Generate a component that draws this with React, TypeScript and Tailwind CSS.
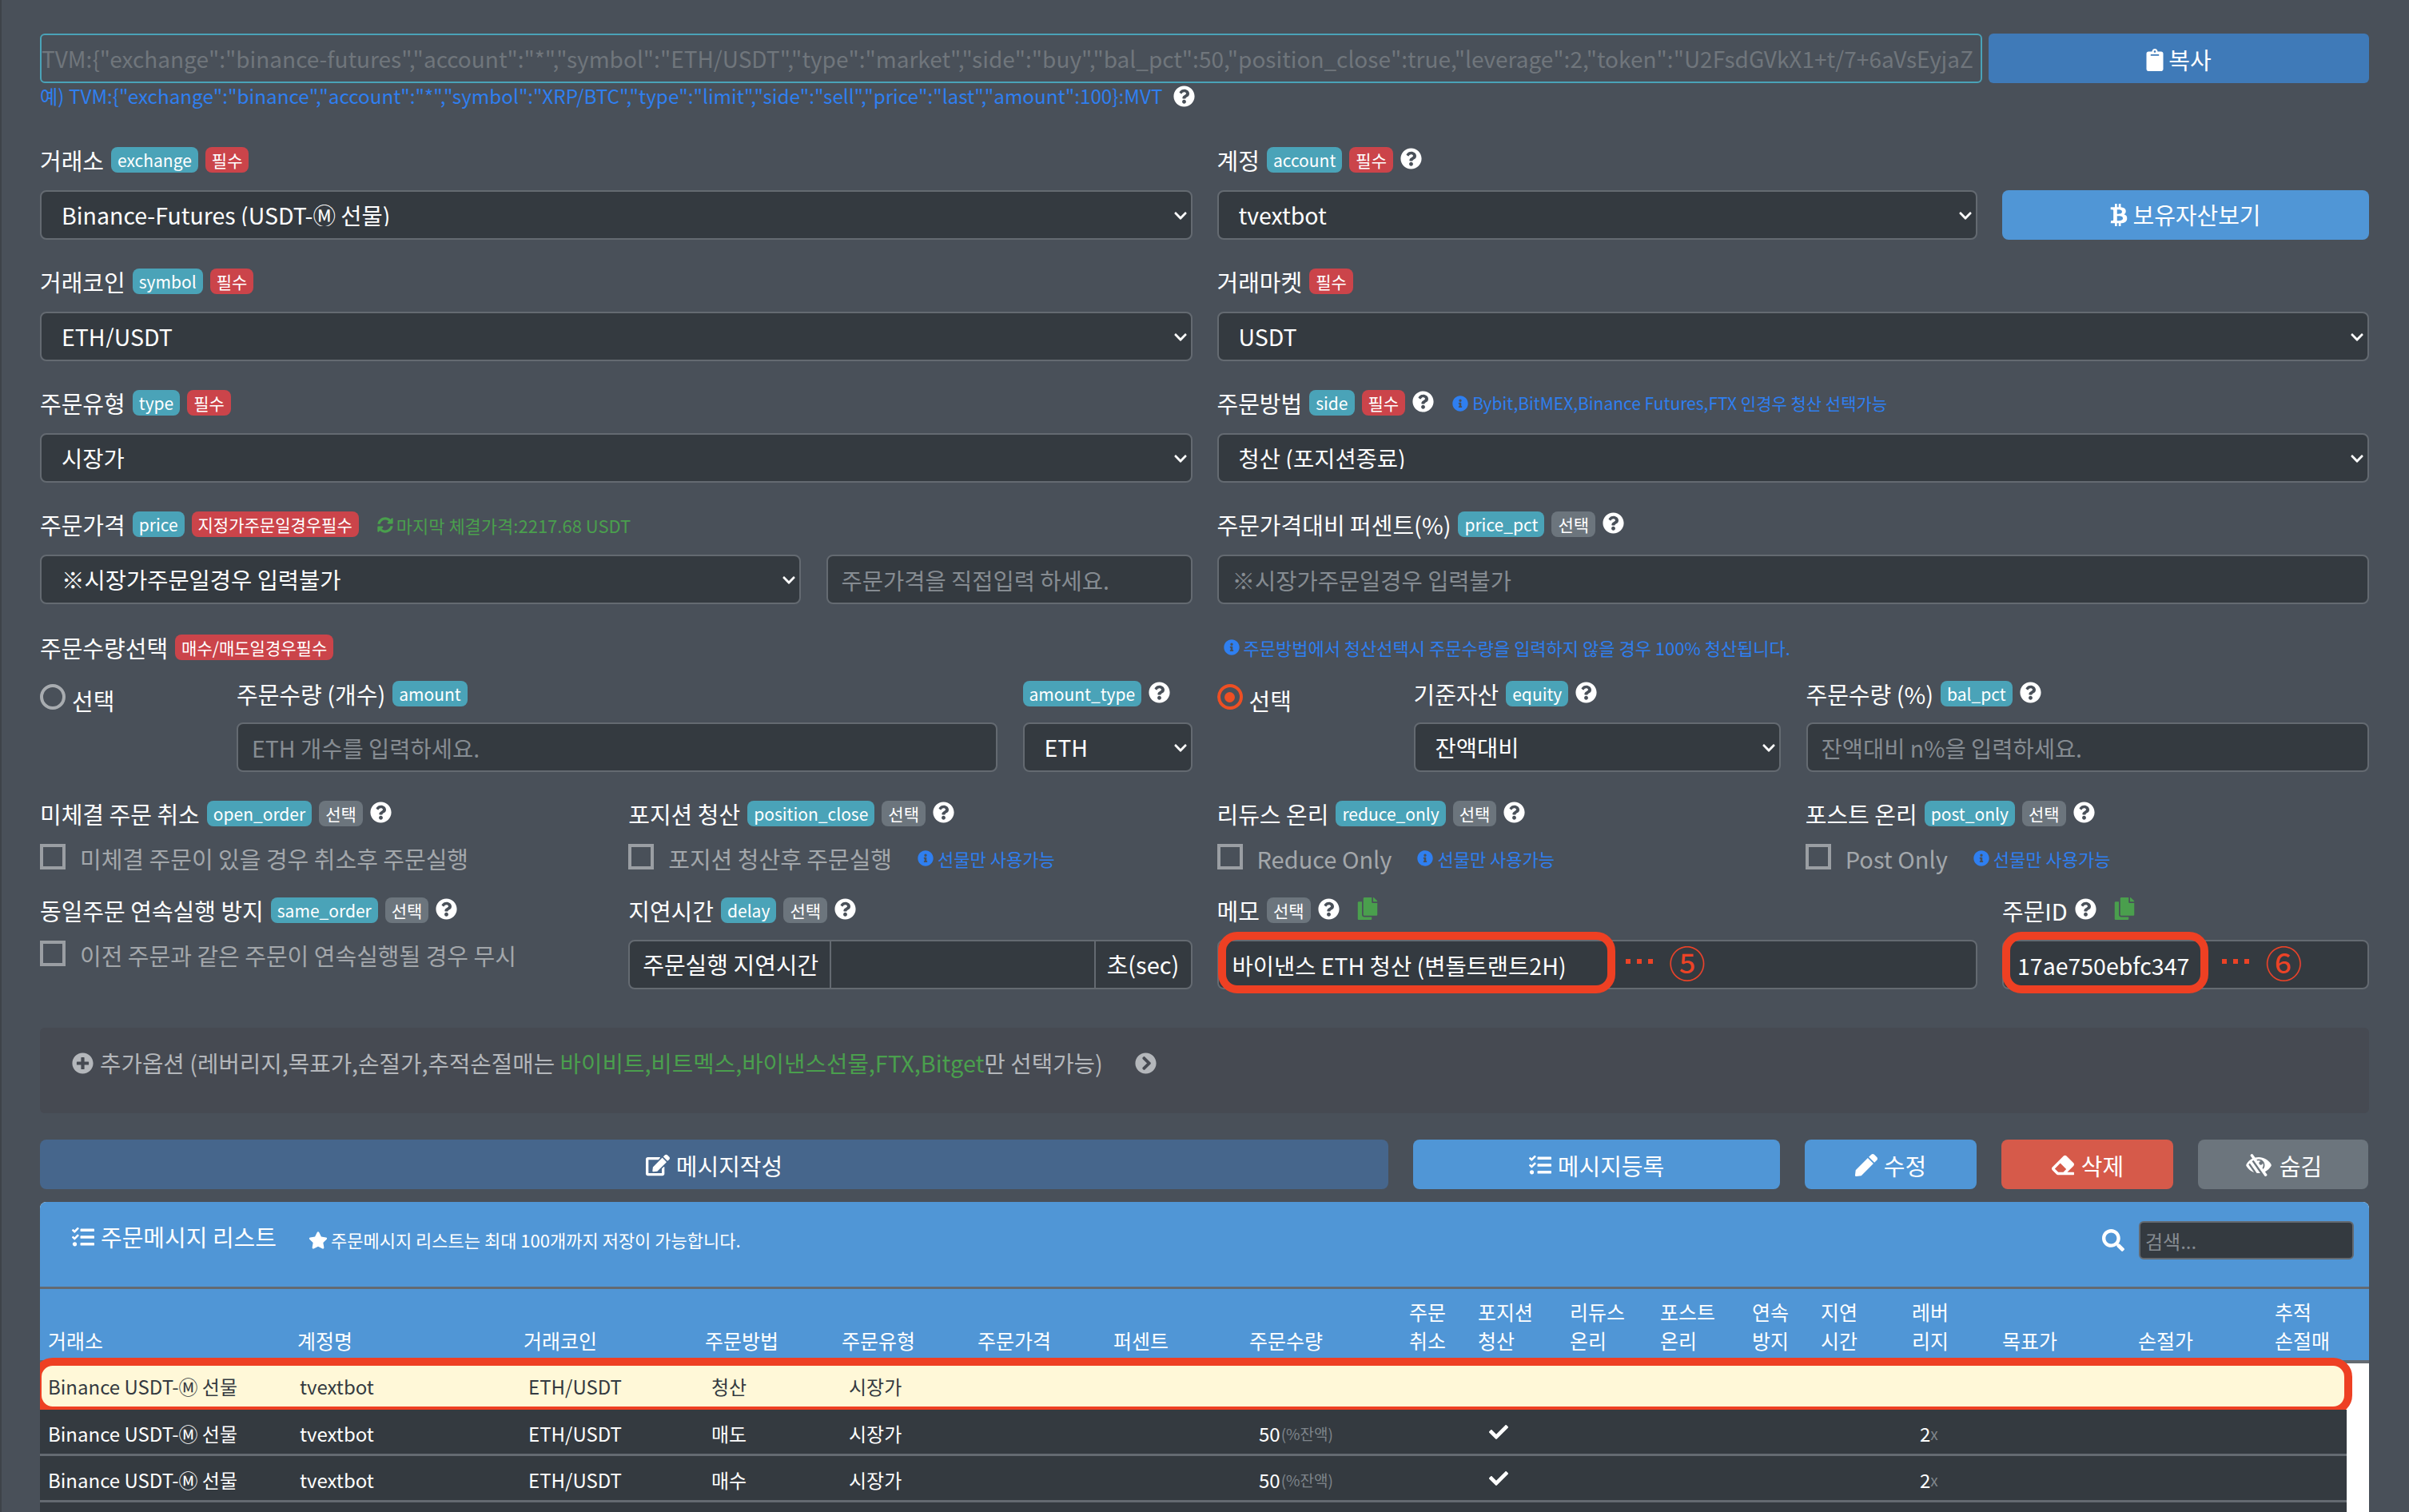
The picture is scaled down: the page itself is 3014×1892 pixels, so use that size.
import React from "react";
import {
  FaQuestionCircle, FaClipboard, FaBtc, FaInfoCircle, FaSyncAlt, FaCopy, FaPlusCircle,
  FaChevronCircleRight, FaEdit, FaTasks, FaPen, FaEraser, FaLowVision, FaStar, FaSearch, FaCheck, FaChevronDown,
} from "react-icons/fa";

function Badge({ c, children }: { c: "i" | "r" | "g"; children: React.ReactNode }) {
  const bg = c === "i" ? "bg-[#4aa3b8]" : c === "r" ? "bg-[#cb444a]" : "bg-[#6c757d]";
  return <span className={`${bg} inline-flex items-center h-[32px] px-[8px] rounded-[8px] text-white text-[21px] leading-none whitespace-nowrap`}>{children}</span>;
}

function Q() {
  return <FaQuestionCircle className="text-white w-[27px] h-[27px] -mt-[4px] shrink-0" />;
}

function Label({ text, children, cls = "" }: { text: string; children?: React.ReactNode; cls?: string }) {
  return (
    <div className={`flex items-center gap-[9px] h-[36px] whitespace-nowrap ${cls}`}>
      {text && <span className="text-white text-[29px] leading-none">{text}</span>}
      {children}
    </div>
  );
}

function Sel({ value, cls = "" }: { value: string; cls?: string }) {
  return (
    <div className={`relative h-[62px] ${cls}`}>
      <select defaultValue={value} className="appearance-none w-full h-full bg-[#343a40] border-2 border-[#646a71] rounded-[8px] pl-[25px] pr-[40px] text-white text-[28.5px] leading-none outline-none">
        <option>{value}</option>
      </select>
      <FaChevronDown className="absolute right-[6px] top-[23px] w-[18px] h-[18px] text-white pointer-events-none" />
    </div>
  );
}

function Inp({ ph, value, cls = "" }: { ph?: string; value?: string; cls?: string }) {
  return (
    <input readOnly placeholder={ph} defaultValue={value} className={`h-[62px] bg-[#343a40] border-2 border-[#646a71] rounded-[8px] px-[17px] text-white text-[28.5px] outline-none placeholder:text-[#868c92] ${cls}`} />
  );
}

function Info({ text, size = "text-[22px]" }: { text: string; size?: string }) {
  return (
    <span className={`inline-flex items-center gap-[5px] text-[#2f7ff0] ${size} leading-none whitespace-nowrap`}>
      <FaInfoCircle className="w-[20px] h-[20px] shrink-0" />
      {text}
    </span>
  );
}

function Check({ text, children }: { text: string; children?: React.ReactNode }) {
  return (
    <div className="flex items-center h-[42px] whitespace-nowrap">
      <span className="w-[32px] h-[32px] border-[4px] border-[#9a9ea3] shrink-0 -mt-[8px]" />
      <span className="ml-[18px] text-[#a3a7ab] text-[29px] leading-none -mt-[4px]">{text}</span>
      {children}
    </div>
  );
}

function Radio({ on }: { on?: boolean }) {
  return (
    <div className="flex items-start h-[42px] pt-[6px]">
      <span className={`w-[32px] h-[32px] rounded-full border-[4px] flex items-center justify-center shrink-0 ${on ? "border-[#ee4f23]" : "border-[#a8acb0]"}`}>
        {on && <span className="w-[13px] h-[13px] rounded-full bg-[#ee4f23]" />}
      </span>
      <span className="ml-[8px] text-white text-[29px] leading-none mt-[6px]">선택</span>
    </div>
  );
}

function ActionBtn({ bg, w, icon, text }: { bg: string; w: string; icon: React.ReactNode; text: string }) {
  return (
    <div className={`${bg} ${w} h-[62px] rounded-[8px] pt-[2px] flex items-center justify-center gap-[8px] text-white text-[29px] leading-none`}>
      {icon}{text}
    </div>
  );
}

function Mark({ n, left }: { n: string; left: string }) {
  return (
    <span className={`absolute top-[4px] ${left} flex items-center gap-[20px] text-[#ec4326] leading-none pointer-events-none`}>
      <span className="flex gap-[8px]">
        <span className="w-[6px] h-[6px] bg-[#ec4326]" />
        <span className="w-[6px] h-[6px] bg-[#ec4326]" />
        <span className="w-[6px] h-[6px] bg-[#ec4326]" />
      </span>
      <span className="text-[46px]">{n}</span>
    </span>
  );
}

const headCols = "grid grid-cols-[312px_283px_227px_171px_170px_170px_170px_200px_86px_115px_113px_115px_86px_114px_113px_170px_171px_128px]";
const bodyCols = "grid grid-cols-[315px_286px_229px_172px_172px_172px_169px_200px_84px_116px_115px_115px_85px_112px_115px_173px_170px_86px]";

const heads: [string, string][] = [
  ["", "거래소"], ["", "계정명"], ["", "거래코인"], ["", "주문방법"], ["", "주문유형"], ["", "주문가격"], ["", "퍼센트"], ["", "주문수량"],
  ["주문", "취소"], ["포지션", "청산"], ["리듀스", "온리"], ["포스트", "온리"], ["연속", "방지"], ["지연", "시간"], ["레버", "리지"], ["", "목표가"], ["", "손절가"], ["추적", "손절매"],
];

function Row({ side, full, light }: { side: string; full?: boolean; light?: boolean }) {
  const cell = "pl-[10px] flex items-center whitespace-nowrap";
  return (
    <div className={`relative ${bodyCols} h-[58px] text-[24px] leading-none ${light ? "bg-[#fff8d8] text-[#343a40]" : "bg-[#343a40] text-white pt-[4px] border-b-[3px] border-[#646a71]"}`}>
      <div className={cell}>Binance USDT-Ⓜ 선물</div>
      <div className={cell}>tvextbot</div>
      <div className={cell}>ETH/USDT</div>
      <div className={cell}>{side}</div>
      <div className={cell}>시장가</div>
      <div /><div />
      <div className={cell}>{full && <>50<span className="text-[#7f858b] text-[19px] ml-[1px]">(%잔액)</span></>}</div>
      <div />
      <div className={cell}>{full && <FaCheck className="w-[24px] h-[24px] ml-[4px] -mt-[3px]" />}</div>
      <div /><div /><div /><div />
      <div className={cell}>{full && <>2<span className="text-[#7f858b] text-[19px]">x</span></>}</div>
      <div /><div /><div />
      {light && <div className="absolute -left-[8px] right-[-7px] -top-[7px] -bottom-[6px] border-[10px] border-[#ee4023] rounded-[24px] pointer-events-none" />}
    </div>
  );
}

export default function App() {
  return (
    <div className="w-full h-[1892px] overflow-hidden bg-[#495059] border-l-2 border-[#3e4349] pl-[48px] pr-[50px] pt-[42px]" style={{ fontFamily: '"Noto Sans CJK KR", "Noto Sans", sans-serif' }}>
      <div className="flex gap-[8px]">
        <input readOnly defaultValue={'TVM:{"exchange":"binance-futures","account":"*","symbol":"ETH/USDT","type":"market","side":"buy","bal_pct":50,"position_close":true,"leverage":2,"token":"U2FsdGVkX1+t/7+6aVsEyjaZ'}
          className="w-[2430px] h-[62px] bg-transparent border-2 border-[#4aa3b8] rounded-[6px] text-[#70767c] text-[28px] outline-none" />
        <div className="flex-1 h-[62px] bg-[#3f7ab8] rounded-[6px] pt-[3px] flex items-center justify-center gap-[6px] text-white text-[29px]">
          <FaClipboard className="w-[22px] h-[28px]" />복사
        </div>
      </div>
      <div className="flex items-center gap-[14px] h-[32px] text-[#2f7ff0] text-[24.25px] whitespace-nowrap">
        <span>{'예) TVM:{"exchange":"binance","account":"*","symbol":"XRP/BTC","type":"limit","side":"sell","price":"last","amount":100}:MVT'}</span>
        <FaQuestionCircle className="text-white w-[27px] h-[27px]" />
      </div>

      <div className="grid grid-cols-2 gap-x-[31px] mt-[46px]">
        <div>
          <Label text="거래소"><Badge c="i">exchange</Badge><Badge c="r">필수</Badge></Label>
          <Sel value="Binance-Futures (USDT-Ⓜ 선물)" cls="mt-[20px]" />
        </div>
        <div>
          <Label text="계정"><Badge c="i">account</Badge><Badge c="r">필수</Badge><Q /></Label>
          <div className="flex gap-[31px] mt-[20px]">
            <Sel value="tvextbot" cls="flex-1" />
            <div className="w-[459px] h-[62px] bg-[#5096d6] rounded-[8px] flex items-center justify-center gap-[6px] text-white text-[29px]">
              <FaBtc className="w-[22px] h-[28px]" />보유자산보기
            </div>
          </div>
        </div>

        <div className="mt-[34px]">
          <Label text="거래코인"><Badge c="i">symbol</Badge><Badge c="r">필수</Badge></Label>
          <Sel value="ETH/USDT" cls="mt-[20px]" />
        </div>
        <div className="mt-[34px]">
          <Label text="거래마켓"><Badge c="r">필수</Badge></Label>
          <Sel value="USDT" cls="mt-[20px]" />
        </div>

        <div className="mt-[34px]">
          <Label text="주문유형"><Badge c="i">type</Badge><Badge c="r">필수</Badge></Label>
          <Sel value="시장가" cls="mt-[20px]" />
        </div>
        <div className="mt-[34px]">
          <Label text="주문방법">
            <Badge c="i">side</Badge><Badge c="r">필수</Badge><Q />
            <span className="ml-[14px] mt-[6px]"><Info text="Bybit,BitMEX,Binance Futures,FTX 인경우 청산 선택가능" size="text-[21px]" /></span>
          </Label>
          <Sel value="청산 (포지션종료)" cls="mt-[20px]" />
        </div>

        <div className="mt-[34px]">
          <Label text="주문가격">
            <Badge c="i">price</Badge><Badge c="r">지정가주문일경우필수</Badge>
            <span className="ml-[14px] mt-[2px] inline-flex items-center gap-[4px] text-[#4a9f4d] text-[22px] leading-none">
              <FaSyncAlt className="w-[20px] h-[20px]" />마지막 체결가격:2217.68 USDT
            </span>
          </Label>
          <div className="flex gap-[32px] mt-[20px]">
            <Sel value="※시장가주문일경우 입력불가" cls="flex-1" />
            <Inp ph="주문가격을 직접입력 하세요." cls="w-[458px]" />
          </div>
        </div>
        <div className="mt-[34px]">
          <Label text="주문가격대비 퍼센트(%)"><Badge c="i">price_pct</Badge><Badge c="g">선택</Badge><Q /></Label>
          <Inp ph="※시장가주문일경우 입력불가" cls="w-full mt-[20px]" />
        </div>

        <div className="mt-[36px]">
          <Label text="주문수량선택"><Badge c="r">매수/매도일경우필수</Badge></Label>
          <div className="grid grid-cols-[214px_1fr_212px] gap-x-[32px] mt-[22px]">
            <Radio />
            <div>
              <Label text="주문수량 (개수)"><Badge c="i">amount</Badge></Label>
              <Inp ph="ETH 개수를 입력하세요." cls="w-full mt-[18px]" />
            </div>
            <div>
              <Label text=""><Badge c="i">amount_type</Badge><Q /></Label>
              <Sel value="ETH" cls="mt-[18px]" />
            </div>
          </div>
        </div>
        <div className="mt-[36px]">
          <div className="h-[36px] flex items-center pl-[8px]"><Info text="주문방법에서 청산선택시 주문수량을 입력하지 않을 경우 100% 청산됩니다." /></div>
          <div className="grid grid-cols-[214px_459px_1fr] gap-x-[32px] mt-[22px]">
            <Radio on />
            <div>
              <Label text="기준자산"><Badge c="i">equity</Badge><Q /></Label>
              <Sel value="잔액대비" cls="mt-[18px]" />
            </div>
            <div>
              <Label text="주문수량 (%)"><Badge c="i">bal_pct</Badge><Q /></Label>
              <Inp ph="잔액대비 n%을 입력하세요." cls="w-full mt-[18px]" />
            </div>
          </div>
        </div>
      </div>

      <div className="grid grid-cols-4 gap-x-[31px] mt-[34px]">
        <div>
          <Label text="미체결 주문 취소"><Badge c="i">open_order</Badge><Badge c="g">선택</Badge><Q /></Label>
          <div className="mt-[19px]"><Check text="미체결 주문이 있을 경우 취소후 주문실행" /></div>
        </div>
        <div>
          <Label text="포지션 청산"><Badge c="i">position_close</Badge><Badge c="g">선택</Badge><Q /></Label>
          <div className="mt-[19px]"><Check text="포지션 청산후 주문실행"><span className="ml-[32px]"><Info text="선물만 사용가능" /></span></Check></div>
        </div>
        <div>
          <Label text="리듀스 온리"><Badge c="i">reduce_only</Badge><Badge c="g">선택</Badge><Q /></Label>
          <div className="mt-[19px]"><Check text="Reduce Only"><span className="ml-[32px]"><Info text="선물만 사용가능" /></span></Check></div>
        </div>
        <div>
          <Label text="포스트 온리"><Badge c="i">post_only</Badge><Badge c="g">선택</Badge><Q /></Label>
          <div className="mt-[19px]"><Check text="Post Only"><span className="ml-[32px]"><Info text="선물만 사용가능" /></span></Check></div>
        </div>
      </div>

      <div className="grid grid-cols-4 gap-x-[31px] mt-[24px]">
        <div>
          <Label text="동일주문 연속실행 방지"><Badge c="i">same_order</Badge><Badge c="g">선택</Badge><Q /></Label>
          <div className="mt-[19px]"><Check text="이전 주문과 같은 주문이 연속실행될 경우 무시" /></div>
        </div>
        <div>
          <Label text="지연시간"><Badge c="i">delay</Badge><Badge c="g">선택</Badge><Q /></Label>
          <div className="flex h-[62px] mt-[19px] bg-[#343a40] border-2 border-[#646a71] rounded-[8px] text-white text-[29px] items-center">
            <div className="w-[252px] h-full flex items-center pl-[16px] border-r-2 border-[#646a71] whitespace-nowrap">주문실행 지연시간</div>
            <div className="flex-1" />
            <div className="w-[121px] h-full flex items-center justify-center border-l-2 border-[#646a71] whitespace-nowrap">초(sec)</div>
          </div>
        </div>
        <div className="col-span-2">
          <div className="flex gap-[31px]">
            <div className="flex-1">
              <Label text="메모"><Badge c="g">선택</Badge><Q /><FaCopy className="w-[28px] h-[28px] text-[#4a9f4d] ml-[12px] -mt-[4px]" /></Label>
              <div className="relative mt-[19px]">
                <Inp value="바이낸스 ETH 청산 (변돌트랜트2H)" cls="w-full" />
                <div className="absolute left-[1px] -top-[10px] w-[497px] h-[77px] border-[10px] border-[#ee4023] rounded-[24px] pointer-events-none" />
                <Mark n="⑤" left="left-[511px]" />
              </div>
            </div>
            <div className="w-[459px]">
              <Label text="주문ID"><Q /><FaCopy className="w-[28px] h-[28px] text-[#4a9f4d] ml-[12px] -mt-[4px]" /></Label>
              <div className="relative mt-[19px]">
                <Inp value="17ae750ebfc347" cls="w-full" />
                <div className="absolute left-0 -top-[10px] w-[258px] h-[77px] border-[10px] border-[#ee4023] rounded-[24px] pointer-events-none" />
                <Mark n="⑥" left="left-[275px]" />
              </div>
            </div>
          </div>
        </div>
      </div>

      <div className="mt-[48px] h-[107px] bg-[#464a52] rounded-[6px] flex items-center pl-[40px] pb-[19px] text-[#b4b7bb] text-[28.75px] whitespace-nowrap leading-none">
        <FaPlusCircle className="w-[27px] h-[27px] mr-[8px]" />
        추가옵션 (레버리지,목표가,손절가,추적손절매는&nbsp;<span className="text-[#4a9f4d]">바이비트,비트멕스,바이낸스선물,FTX,Bitget</span>만 선택가능)
        <FaChevronCircleRight className="w-[27px] h-[27px] ml-[40px]" />
      </div>

      <div className="flex gap-[31px] mt-[33px]">
        <ActionBtn bg="bg-[#46668c]" w="w-[1687px]" icon={<FaEdit className="w-[30px] h-[28px]" />} text="메시지작성" />
        <ActionBtn bg="bg-[#5096d6]" w="w-[459px]" icon={<FaTasks className="w-[28px] h-[28px]" />} text="메시지등록" />
        <ActionBtn bg="bg-[#5096d6]" w="w-[215px]" icon={<FaPen className="w-[28px] h-[28px]" />} text="수정" />
        <ActionBtn bg="bg-[#d65a4a]" w="w-[215px]" icon={<FaEraser className="w-[30px] h-[28px]" />} text="삭제" />
        <ActionBtn bg="bg-[#6c757d]" w="w-[213px]" icon={<FaLowVision className="w-[36px] h-[28px]" />} text="숨김" />
      </div>

      <div className="mt-[16px] bg-white rounded-t-[8px] overflow-hidden">
        <div className="relative bg-[#5096d6] h-[109px] border-b-[3px] border-[#646a71] flex items-start pt-[28px] pl-[40px] text-white">
          <FaTasks className="w-[28px] h-[28px] mt-[2px]" />
          <span className="ml-[8px] text-[29px] leading-none mt-[1px]">주문메시지 리스트</span>
          <FaStar className="ml-[40px] mt-[8px] w-[24px] h-[24px]" />
          <span className="ml-[4px] text-[22px] leading-none mt-[8px]">주문메시지 리스트는 최대 100개까지 저장이 가능합니다.</span>
          <FaSearch className="absolute left-[2580px] top-[34px] w-[28px] h-[28px]" />
          <input readOnly placeholder="검색..." className="absolute left-[2626px] top-[24px] w-[269px] h-[48px] bg-[#343a40] border-2 border-[#646a71] rounded-[6px] px-[6px] text-[24px] outline-none placeholder:text-[#868c92]" />
        </div>
        <div className={`${headCols} bg-[#5096d6] h-[93px] text-white text-[25px] leading-[36px] border-b-[4px] border-[#646a71]`}>
          {heads.map(([a, b], i) => (
            <div key={i} className="pl-[10px] pt-[10px] whitespace-nowrap">
              <div className="h-[36px]">{a}</div>
              <div className="h-[36px]">{b}</div>
            </div>
          ))}
        </div>
        <div className="w-[2886px]">
          <Row side="청산" light />
          <Row side="매도" full />
          <Row side="매수" full />
          <div className="h-[40px] bg-[#343a40]" />
        </div>
      </div>
    </div>
  );
}
